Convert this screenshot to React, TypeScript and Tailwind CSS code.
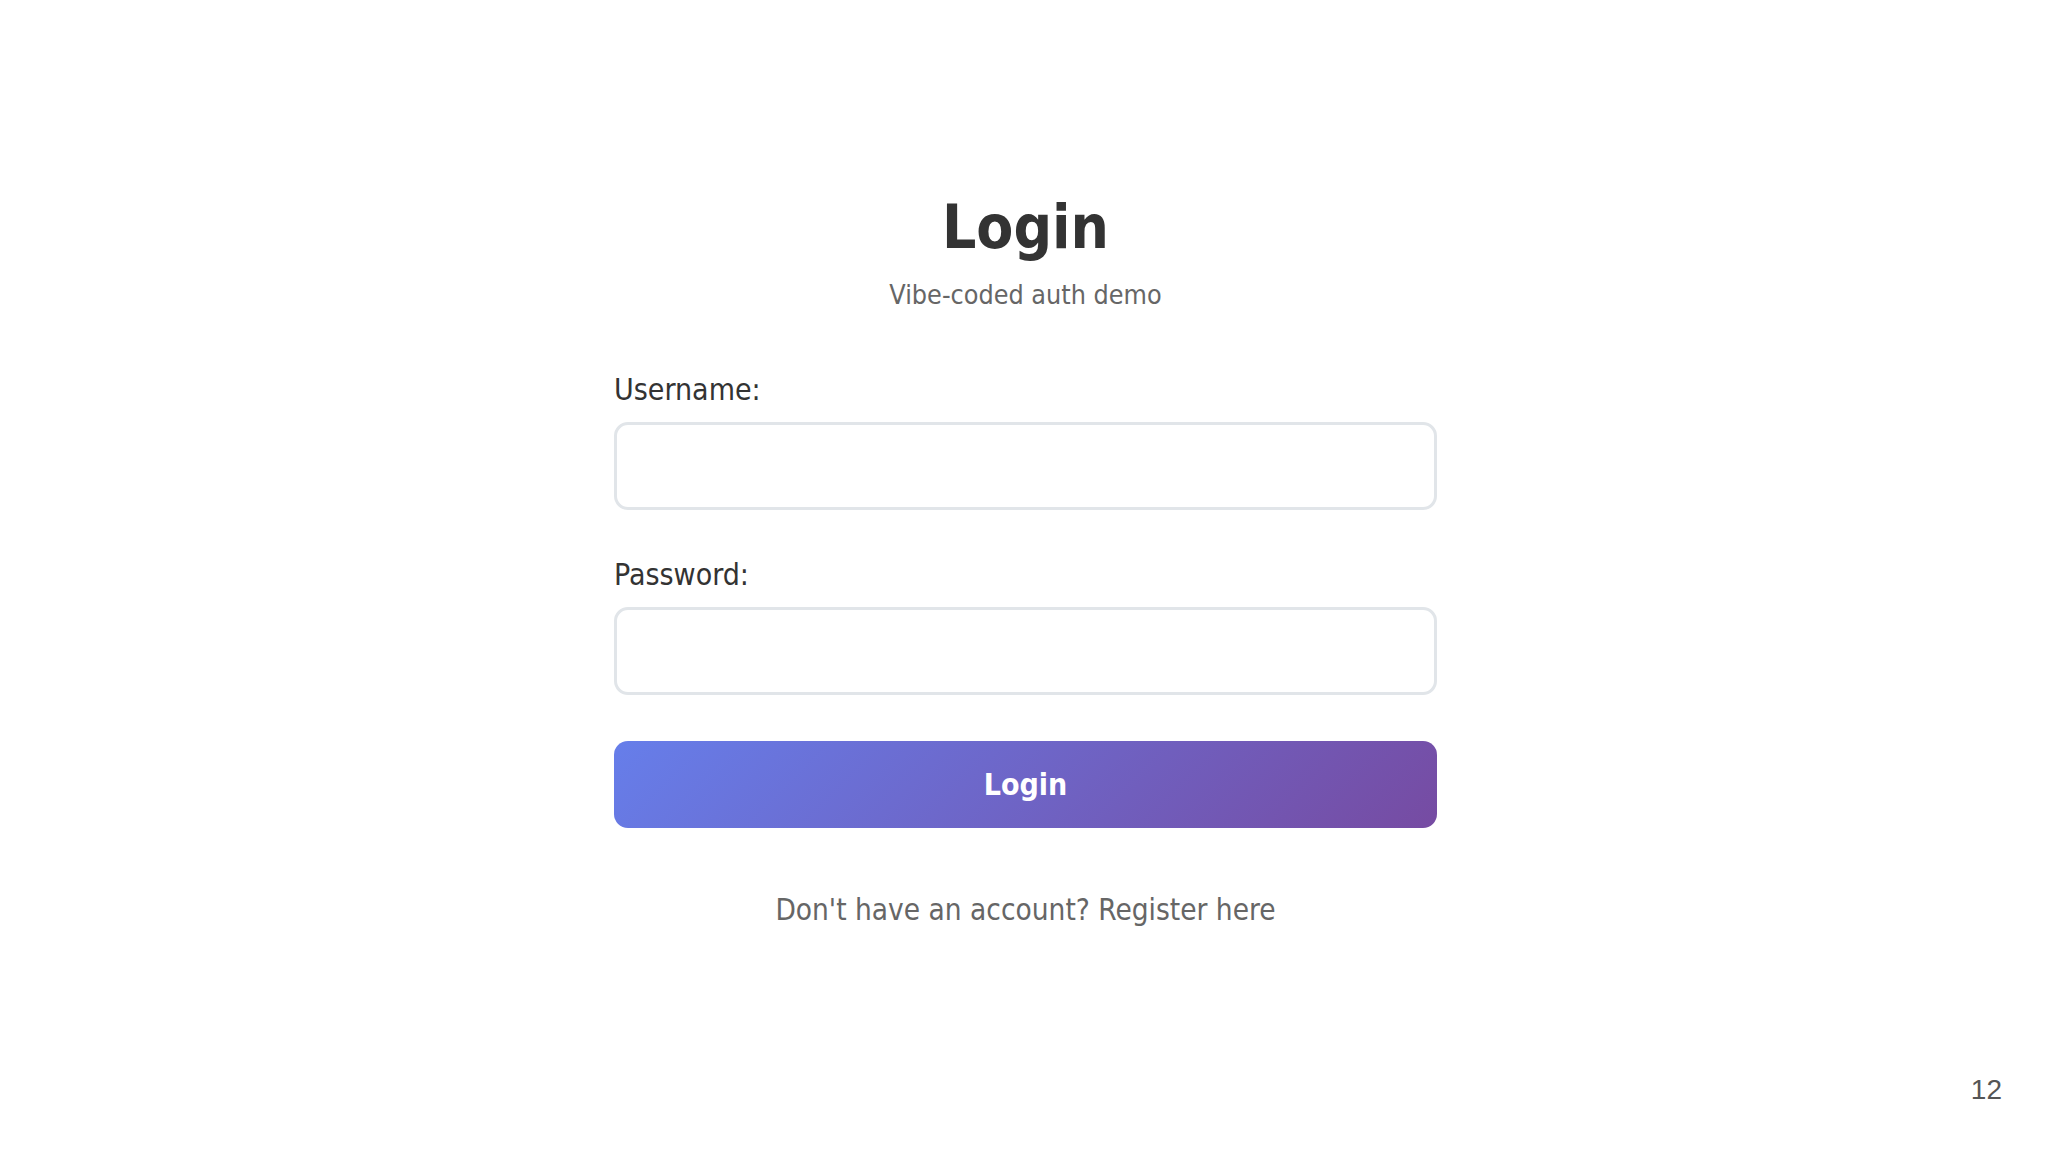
export default function App() {
  return (
    <div
      className="relative min-h-[1152px] w-full bg-white pl-[3px]"
      style={{ fontFamily: '"DejaVu Sans Condensed", "DejaVu Sans", Verdana, sans-serif' }}
    >
      <div className="mx-auto w-[823px] pt-[191px]">
        <h1 className="text-center text-[60px] font-bold leading-[72px] text-[#333333]">Login</h1>
        <p className="mt-[14px] text-center text-[26.7px] leading-[36px] text-[#666666]">Vibe-coded auth demo</p>

        <form className="mt-[57px]">
          <label className="block text-[30px] leading-[40px] text-[#333333]">Username:</label>
          <input
            type="text"
            className="mt-[12px] block h-[88px] w-full rounded-[14px] border-[3px] border-[#e1e5e9] bg-white outline-none"
          />

          <label className="mt-[45px] block text-[30px] leading-[40px] text-[#333333]">Password:</label>
          <input
            type="password"
            className="mt-[12px] block h-[88px] w-full rounded-[14px] border-[3px] border-[#e1e5e9] bg-white outline-none"
          />

          <button
            type="button"
            className="mt-[46px] block h-[87px] w-full rounded-[14px] bg-[linear-gradient(135deg,#667eea_0%,#764ba2_100%)] text-[30px] font-bold text-white"
          >
            Login
          </button>
        </form>

        <p className="mt-[60px] text-center text-[29.5px] text-[#666666]">
          Don't have an account? <a className="text-[#666666]">Register here</a>
        </p>
      </div>

      <div
        className="absolute bottom-[41px] right-[46px] text-[28px] text-[#555555]"
        style={{ fontFamily: '"Liberation Sans", sans-serif' }}
      >
        12
      </div>
    </div>
  );
}
